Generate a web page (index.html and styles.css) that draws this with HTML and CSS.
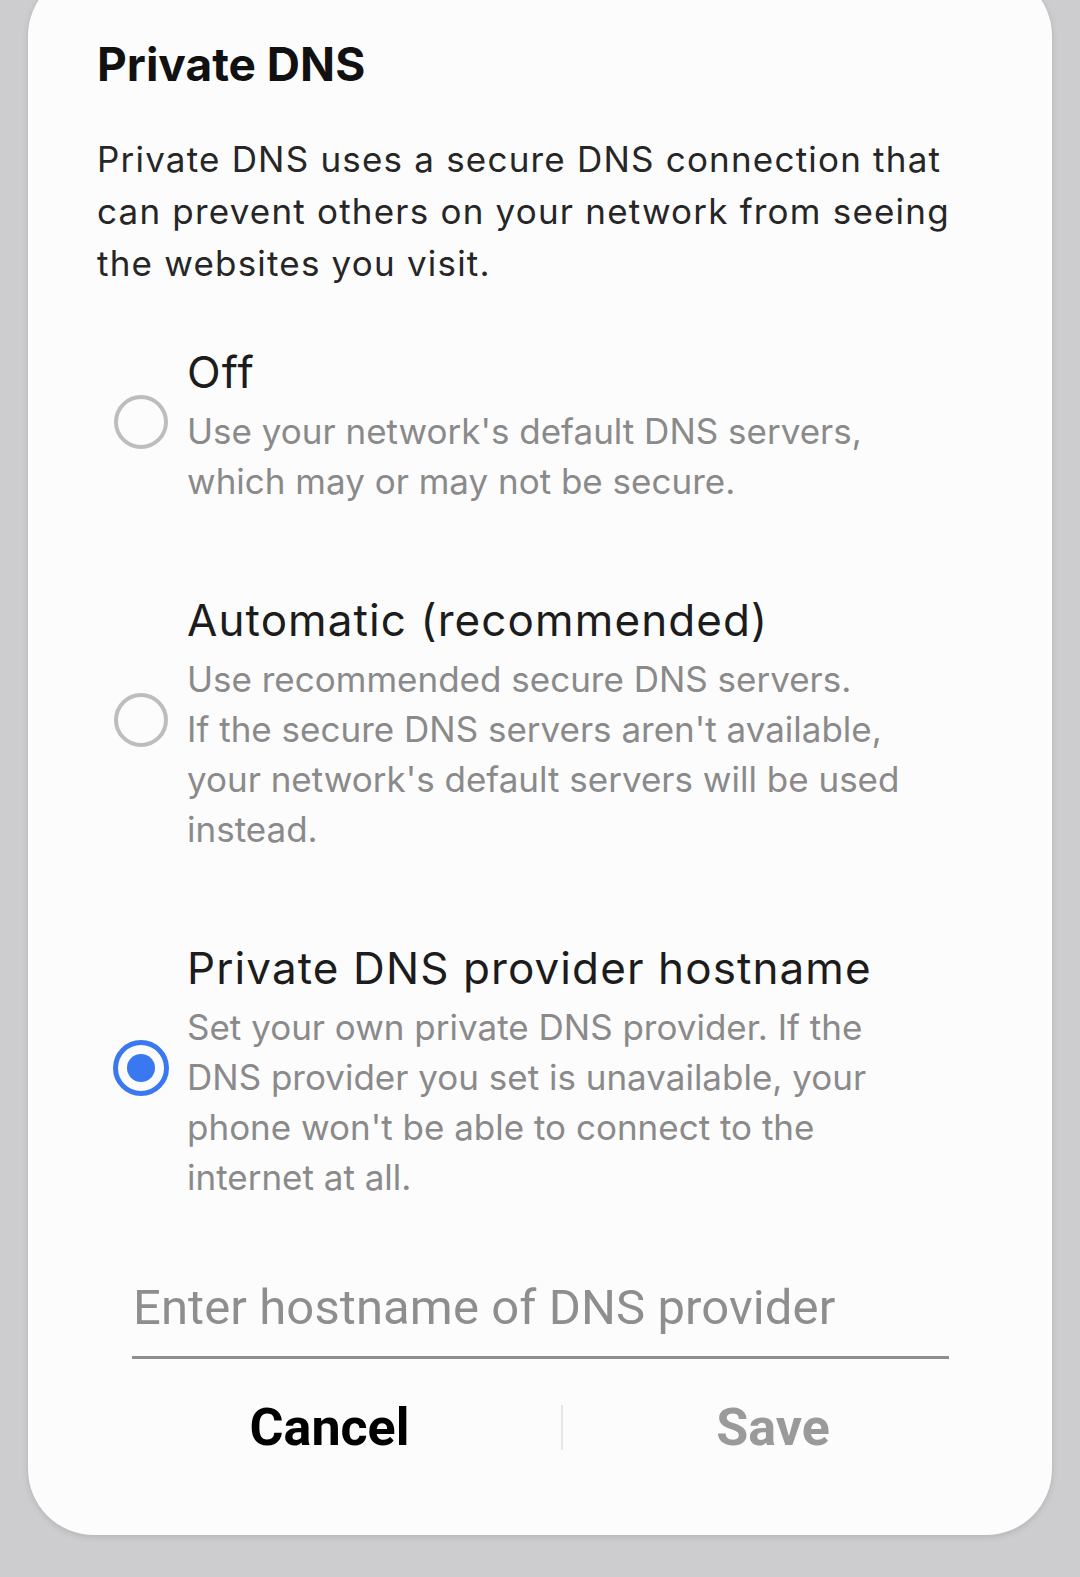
FILE: index.html
```html
<!DOCTYPE html>
<html lang="en">
<head>
<meta charset="utf-8">
<title>Private DNS</title>
<link rel="stylesheet" href="styles.css">
</head>
<body>
<div class="screen">
  <div class="dialog">
    <h1 class="dialog-title">Private DNS</h1>
    <p class="dialog-desc">Private DNS uses a secure DNS connection that<br>can prevent others on your network from seeing<br>the websites you visit.</p>
    <div class="options">
      <div class="option">
        <span class="radio"></span>
        <div class="option-text">
          <div class="option-title">Off</div>
          <div class="option-sub">Use your network's default DNS servers,<br>which may or may not be secure.</div>
        </div>
      </div>
      <div class="option">
        <span class="radio"></span>
        <div class="option-text">
          <div class="option-title">Automatic (recommended)</div>
          <div class="option-sub">Use recommended secure DNS servers.<br>If the secure DNS servers aren't available,<br>your network's default servers will be used<br>instead.</div>
        </div>
      </div>
      <div class="option">
        <span class="radio radio-on"></span>
        <div class="option-text">
          <div class="option-title">Private DNS provider hostname</div>
          <div class="option-sub">Set your own private DNS provider. If the<br>DNS provider you set is unavailable, your<br>phone won't be able to connect to the<br>internet at all.</div>
        </div>
      </div>
    </div>
    <div class="field">
      <span class="placeholder">Enter hostname of DNS provider</span>
    </div>
    <div class="actions">
      <div class="btn btn-cancel">Cancel</div>
      <div class="divider"></div>
      <div class="btn btn-save">Save</div>
    </div>
  </div>
</div>
</body>
</html>
```

FILE: styles.css
```css
html, body {
  margin: 0;
  padding: 0;
}
body {
  width: 1080px;
  height: 1577px;
  overflow: hidden;
  background: #cdcdcf;
  font-family: Inter, "Noto Sans", sans-serif;
}
.screen {
  width: 1080px;
  height: 1577px;
  overflow: hidden;
}
.dialog {
  margin-top: -30px;
  margin-left: 28px;
  width: 1024px;
  box-sizing: border-box;
  background: #fcfcfd;
  border-radius: 66px;
  box-shadow: 0 2px 6px rgba(0, 0, 0, 0.12);
  padding: 64px 0 40px 0;
}
.dialog-title {
  margin: 0 0 0 69px;
  font-size: 46px;
  line-height: 60px;
  font-weight: 700;
  color: #111;
}
.dialog-desc {
  margin: 39px 30px 0 69px;
  font-size: 35px;
  line-height: 52px;
  letter-spacing: 1.2px;
  color: #262626;
  white-space: nowrap;
}
.options {
  margin-top: 49px;
  padding-left: 86px;
  display: flex;
  flex-direction: column;
  gap: 80px;
}
.option {
  display: flex;
  align-items: center;
}
.radio {
  flex: none;
  width: 54px;
  height: 54px;
  box-sizing: border-box;
  border: 4px solid #bdbdbd;
  border-radius: 50%;
  margin-right: 19px;
  position: relative;
}
.radio-on {
  width: 56px;
  height: 56px;
  margin-left: -1px;
  margin-right: 18px;
  border: 5px solid #3a78f2;
}
.radio-on::after {
  content: "";
  position: absolute;
  left: 9px;
  top: 9px;
  width: 28px;
  height: 28px;
  border-radius: 50%;
  background: #3a78f2;
}
.option-title {
  font-size: 44px;
  line-height: 68px;
  letter-spacing: 1.1px;
  color: #1c1c1c;
}
.option-sub {
  font-size: 35px;
  line-height: 50px;
  color: #8a8a8a;
  white-space: nowrap;
}
.field {
  margin: 55px 103px 0 104px;
  height: 99px;
  display: flex;
  align-items: center;
  border-bottom: 3px solid #8f8f8f;
}
.placeholder {
  font-family: Roboto, "Liberation Sans", sans-serif;
  font-size: 49px;
  letter-spacing: 0.1px;
  color: #8e8e8e;
  padding: 2px 0 0 1px;
}
.actions {
  display: flex;
  align-items: center;
  height: 136px;
  padding-left: 70px;
}
.btn {
  font-family: Roboto, "Liberation Sans", sans-serif;
  font-weight: 700;
  font-size: 52px;
  text-align: center;
}
.btn-cancel {
  width: 463px;
  color: #000;
}
.divider {
  width: 2px;
  height: 45px;
  background: #e6e6e8;
}
.btn-save {
  width: 420px;
  color: #9a9a9a;
}
```
